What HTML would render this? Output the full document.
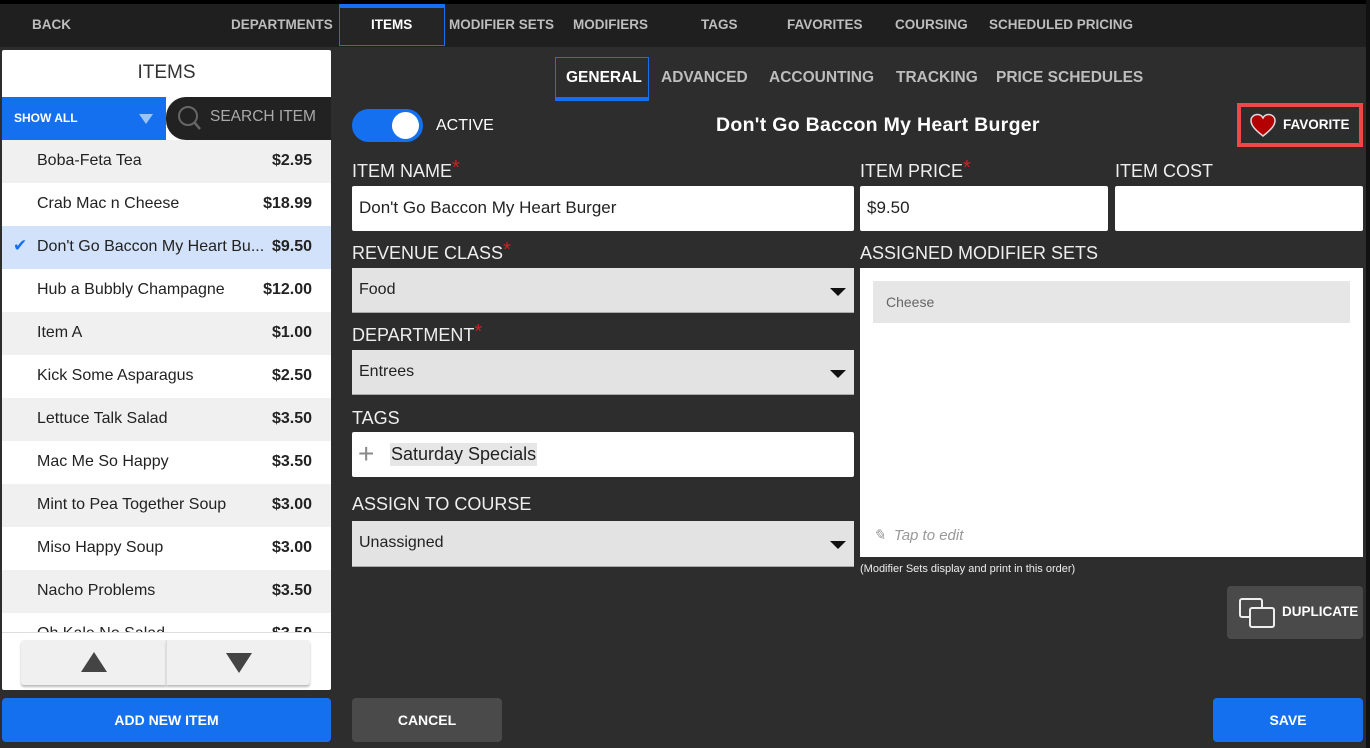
<!DOCTYPE html>
<html><head><style>
*{box-sizing:border-box;margin:0;padding:0}
body{width:1370px;height:748px;background:#2d2d2d;font-family:"Liberation Sans",sans-serif;position:relative;overflow:hidden;color:#fff}
.a{position:absolute}
.top{left:0;top:0;width:1370px;height:47px;background:#1f1f1f;border-top:4px solid #000}
.tn{position:absolute;top:17px;font-size:13.5px;font-weight:bold;color:#bdbdbd}
.st{position:absolute;top:69px;font-size:15.5px;font-weight:bold;color:#bdbdbd}
.row{position:absolute;left:2px;width:329px;height:43px;font-size:16px;color:#222}
.row .n{position:absolute;left:35px;top:12px}
.row .p{position:absolute;right:19px;top:12px;font-weight:bold}
.lbl{position:absolute;font-size:18px;color:#eee}
.star{color:#c22;font-size:20px;vertical-align:top;line-height:14px}
.inp{position:absolute;background:#fff;border-radius:2px;color:#222;font-size:17px;padding:12px 7px}
.sel{position:absolute;background:#e3e3e3;color:#222;font-size:16px;padding:13px 7px;border-bottom:1px solid #aaa}
.sel:after{content:"";position:absolute;right:8px;top:20px;border-left:8px solid transparent;border-right:8px solid transparent;border-top:8px solid #111}
.btn{position:absolute;border-radius:4px;font-size:14px;font-weight:bold;text-align:center;color:#fff}
</style></head><body>
<div class="a top"></div>
<div class="tn" style="left:32px">BACK</div>
<div class="tn" style="left:231px">DEPARTMENTS</div>
<div class="a" style="left:339px;top:4px;width:106px;height:42px;border:1px solid #1570f0;border-top:4px solid #1570f0;background:#252525"></div>
<div class="tn" style="left:371px;color:#fff">ITEMS</div>
<div class="tn" style="left:449px">MODIFIER SETS</div>
<div class="tn" style="left:573px">MODIFIERS</div>
<div class="tn" style="left:701px">TAGS</div>
<div class="tn" style="left:787px">FAVORITES</div>
<div class="tn" style="left:895px">COURSING</div>
<div class="tn" style="left:989px">SCHEDULED PRICING</div>
<div class="a" style="left:1366px;top:0;width:4px;height:748px;background:#111"></div>

<div class="a" style="left:2px;top:50px;width:329px;height:640px;background:#fff;border-radius:2px"></div>
<div class="a" style="left:2px;top:62px;width:329px;text-align:center;font-size:19px;color:#333">ITEMS</div>
<div class="a" style="left:2px;top:97px;width:164px;height:43px;background:#1570f0"></div>
<div class="a" style="left:14px;top:111px;font-size:12px;font-weight:bold">SHOW ALL</div>
<div class="a" style="left:139px;top:114px;border-left:7px solid transparent;border-right:7px solid transparent;border-top:10px solid #9cc2fa"></div>
<div class="a" style="left:166px;top:97px;width:165px;height:43px;background:#222;border-radius:20px 0 0 20px"></div>
<svg class="a" style="left:176px;top:104px" width="30" height="30"><circle cx="12" cy="12" r="9" fill="none" stroke="#666" stroke-width="2"/><line x1="18" y1="18" x2="24" y2="25" stroke="#666" stroke-width="2.5"/></svg>
<div class="a" style="left:210px;top:108px;font-size:15.5px;color:#aaa">SEARCH ITEM</div>
<div class="row" style="top:140px;background:#f0f0f0"><span class="n">Boba-Feta Tea</span><span class="p">$2.95</span></div>
<div class="row" style="top:183px;background:#fff"><span class="n">Crab Mac n Cheese</span><span class="p">$18.99</span></div>
<div class="row" style="top:226px;background:#d2e2fb"><span class="a" style="left:11px;top:10px;color:#1570f0;font-size:17px">✔</span><span class="n">Don't Go Baccon My Heart Bu...</span><span class="p">$9.50</span></div>
<div class="row" style="top:269px;background:#fff"><span class="n">Hub a Bubbly Champagne</span><span class="p">$12.00</span></div>
<div class="row" style="top:312px;background:#f0f0f0"><span class="n">Item A</span><span class="p">$1.00</span></div>
<div class="row" style="top:355px;background:#fff"><span class="n">Kick Some Asparagus</span><span class="p">$2.50</span></div>
<div class="row" style="top:398px;background:#f0f0f0"><span class="n">Lettuce Talk Salad</span><span class="p">$3.50</span></div>
<div class="row" style="top:441px;background:#fff"><span class="n">Mac Me So Happy</span><span class="p">$3.50</span></div>
<div class="row" style="top:484px;background:#f0f0f0"><span class="n">Mint to Pea Together Soup</span><span class="p">$3.00</span></div>
<div class="row" style="top:527px;background:#fff"><span class="n">Miso Happy Soup</span><span class="p">$3.00</span></div>
<div class="row" style="top:570px;background:#f0f0f0"><span class="n">Nacho Problems</span><span class="p">$3.50</span></div>
<div class="row" style="top:613px;height:19px;background:#fff;overflow:hidden"><span class="n">Oh Kale No Salad</span><span class="p">$3.50</span></div>
<div class="a" style="left:2px;top:632px;width:329px;height:1px;background:#ddd"></div>
<div class="a" style="left:21px;top:640px;width:145px;height:45px;background:#f0f0f0;box-shadow:0 2px 2px #bbb;border-radius:3px 0 0 3px"></div>
<div class="a" style="left:166px;top:640px;width:144px;height:45px;background:#f0f0f0;box-shadow:0 2px 2px #bbb;border-radius:0 3px 3px 0;border-left:1px solid #ddd"></div>
<div class="a" style="left:81px;top:652px;border-left:13px solid transparent;border-right:13px solid transparent;border-bottom:20px solid #444"></div>
<div class="a" style="left:226px;top:653px;border-left:13px solid transparent;border-right:13px solid transparent;border-top:20px solid #444"></div>
<div class="btn" style="left:2px;top:698px;width:329px;height:44px;background:#1570f0;padding-top:14px">ADD NEW ITEM</div>

<div class="a" style="left:555px;top:57px;width:94px;height:44px;border:1px solid #1570f0;border-bottom:4px solid #1570f0"></div>
<div class="st" style="left:566px;color:#fff">GENERAL</div>
<div class="st" style="left:661px">ADVANCED</div>
<div class="st" style="left:769px">ACCOUNTING</div>
<div class="st" style="left:896px">TRACKING</div>
<div class="st" style="left:996px">PRICE SCHEDULES</div>

<div class="a" style="left:352px;top:109px;width:71px;height:33px;border-radius:17px;background:#1570f0"></div>
<div class="a" style="left:392px;top:112px;width:27px;height:27px;border-radius:50%;background:#fff"></div>
<div class="a" style="left:436px;top:117px;font-size:16px">ACTIVE</div>
<div class="a" style="left:716px;top:114px;font-size:19.5px;font-weight:bold;letter-spacing:0.3px">Don't Go Baccon My Heart Burger</div>
<div class="a" style="left:1237px;top:103px;width:126px;height:44px;border:4px solid #f04848"></div>
<svg class="a" style="left:1249px;top:112px" width="28" height="26" viewBox="0 0 28 26"><path d="M14 24 C5 17 2 13 2 8.5 C2 5 5 2.5 8.5 2.5 C11 2.5 13 4 14 6 C15 4 17 2.5 19.5 2.5 C23 2.5 26 5 26 8.5 C26 13 23 17 14 24Z" fill="#b30000" stroke="#ddd" stroke-width="1.5"/></svg>
<div class="a" style="left:1283px;top:117px;font-size:13.5px;font-weight:bold">FAVORITE</div>

<div class="lbl" style="left:352px;top:161px">ITEM NAME<span class="star">*</span></div>
<div class="inp" style="left:352px;top:186px;width:502px;height:45px">Don't Go Baccon My Heart Burger</div>
<div class="lbl" style="left:860px;top:161px">ITEM PRICE<span class="star">*</span></div>
<div class="inp" style="left:860px;top:186px;width:248px;height:45px">$9.50</div>
<div class="lbl" style="left:1115px;top:161px">ITEM COST</div>
<div class="inp" style="left:1115px;top:186px;width:248px;height:45px"></div>

<div class="lbl" style="left:352px;top:243px">REVENUE CLASS<span class="star">*</span></div>
<div class="sel" style="left:352px;top:268px;width:502px;height:45px">Food</div>
<div class="lbl" style="left:352px;top:325px">DEPARTMENT<span class="star">*</span></div>
<div class="sel" style="left:352px;top:350px;width:502px;height:45px">Entrees</div>
<div class="lbl" style="left:352px;top:408px">TAGS</div>
<div class="inp" style="left:352px;top:432px;width:502px;height:45px;padding:0"></div>
<div class="a" style="left:358px;top:439px;font-size:28px;color:#888;line-height:30px">+</div>
<div class="a" style="left:390px;top:443px;background:#e6e6e6;color:#222;font-size:18px;padding:1px 1px">Saturday Specials</div>
<div class="lbl" style="left:352px;top:494px">ASSIGN TO COURSE</div>
<div class="sel" style="left:352px;top:521px;width:502px;height:46px">Unassigned</div>

<div class="lbl" style="left:860px;top:243px">ASSIGNED MODIFIER SETS</div>
<div class="a" style="left:860px;top:268px;width:503px;height:289px;background:#fff"></div>
<div class="a" style="left:873px;top:281px;width:477px;height:42px;background:#e6e6e6;color:#666;font-size:14px;padding:13px 13px">Cheese</div>
<div class="a" style="left:873px;top:526px;font-size:15px;color:#999;font-style:italic">✎&nbsp; Tap to edit</div>
<div class="a" style="left:860px;top:563px;font-size:11px;color:#eee">(Modifier Sets display and print in this order)</div>

<div class="btn" style="left:1227px;top:586px;width:136px;height:53px;background:#4a4a4a"></div>
<svg class="a" style="left:1238px;top:597px" width="38" height="32"><rect x="2" y="2" width="22" height="18" rx="2" fill="none" stroke="#eee" stroke-width="2"/><rect x="12" y="11" width="24" height="19" rx="2" fill="#4a4a4a" stroke="#eee" stroke-width="2"/></svg>
<div class="a" style="left:1282px;top:604px;font-size:13.5px;font-weight:bold">DUPLICATE</div>

<div class="btn" style="left:352px;top:698px;width:150px;height:44px;background:#4a4a4a;padding-top:14px">CANCEL</div>
<div class="btn" style="left:1213px;top:698px;width:150px;height:44px;background:#1570f0;padding-top:14px">SAVE</div>
</body></html>
